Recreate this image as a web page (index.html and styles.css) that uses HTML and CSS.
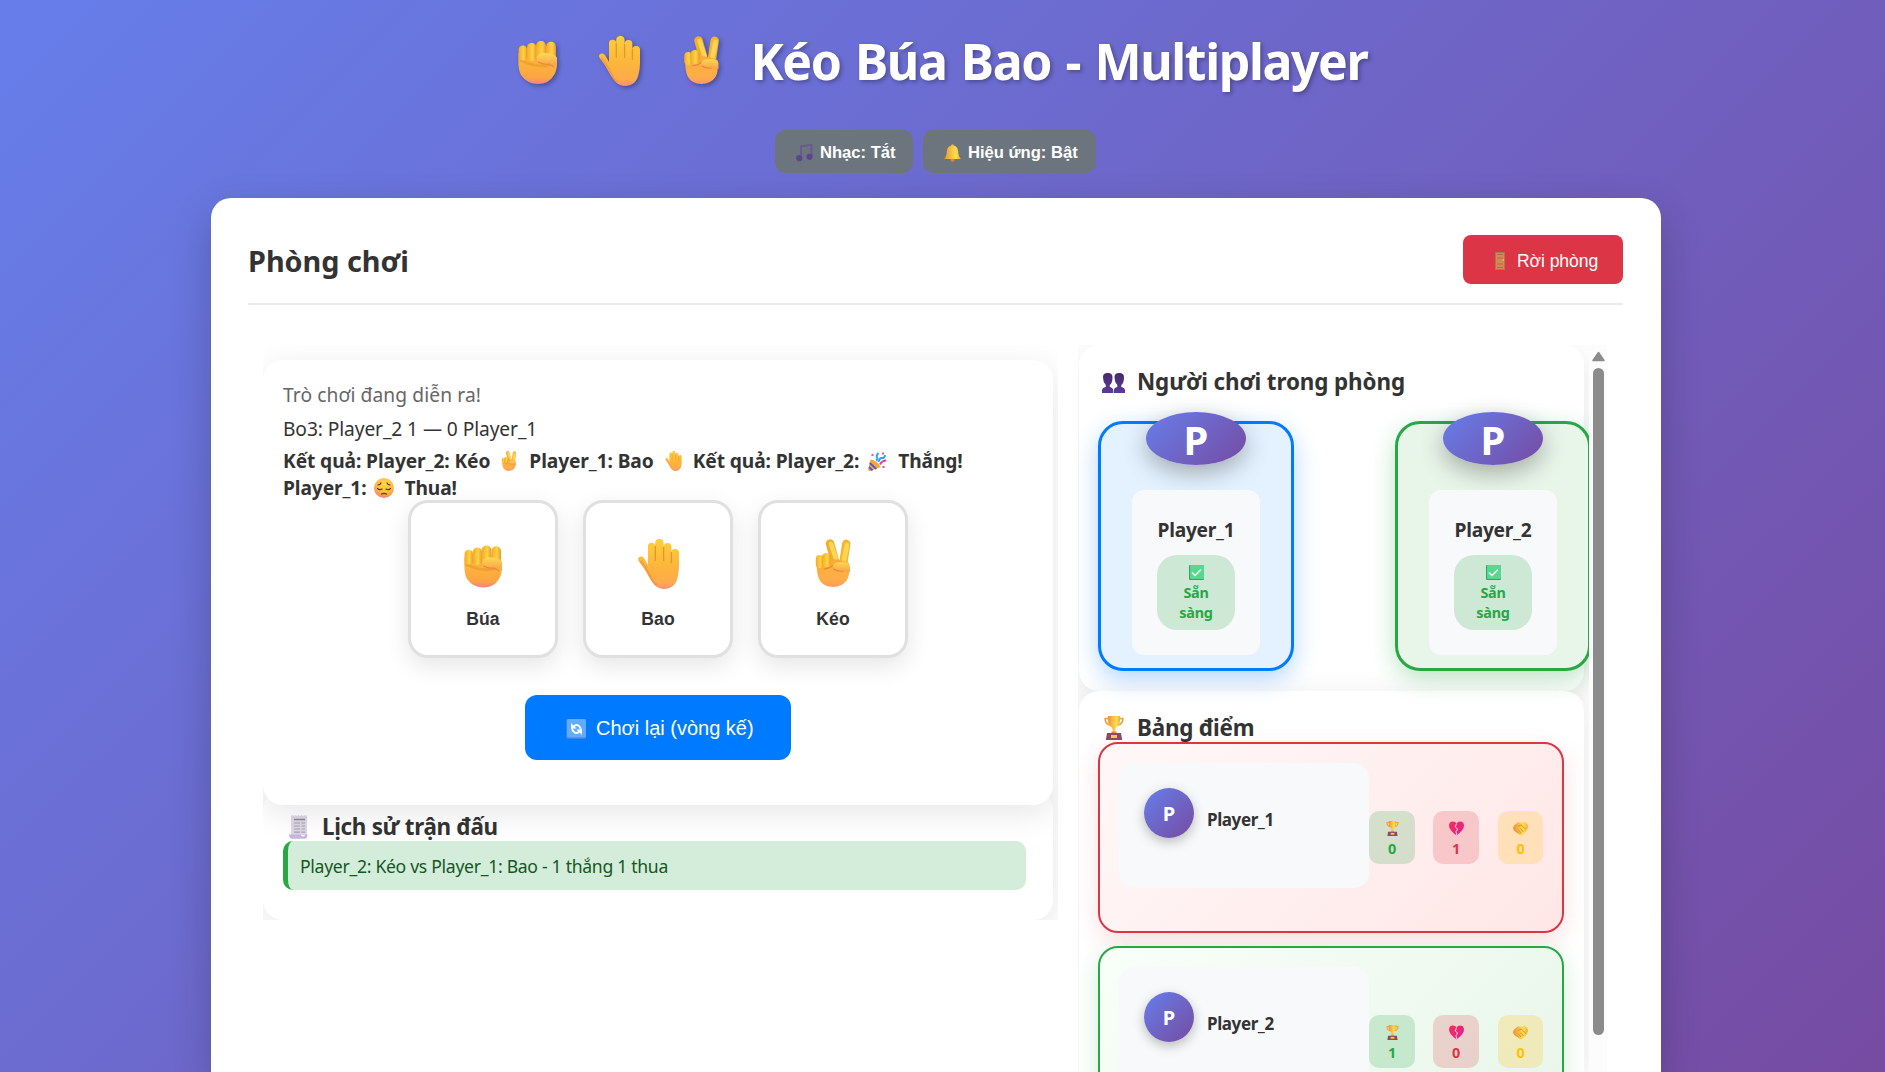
FILE: index.html
```html
<!DOCTYPE html>
<html lang="vi">
<head>
<meta charset="utf-8">
<title>Kéo Búa Bao - Multiplayer</title>
<link rel="stylesheet" href="styles.css">
</head>
<body>
<svg class="defs" width="0" height="0" aria-hidden="true">
  <defs>
    <linearGradient id="skin" x1="0" y1="0" x2="0" y2="1"><stop offset="0" stop-color="#fdcf3c"/><stop offset=".55" stop-color="#fdb53b"/><stop offset=".88" stop-color="#feaa4c"/><stop offset="1" stop-color="#fb8c78"/></linearGradient>
    <linearGradient id="palm" x1="0" y1="0" x2="0" y2="1"><stop offset="0" stop-color="#f5a931"/><stop offset=".4" stop-color="#fdb23e"/><stop offset=".82" stop-color="#fda443"/><stop offset="1" stop-color="#fc7d8a"/></linearGradient>
    <linearGradient id="palm2" x1="0" y1="0" x2="0" y2="1"><stop offset="0" stop-color="#f9ab35"/><stop offset=".7" stop-color="#feae48"/><stop offset="1" stop-color="#fd9b5c"/></linearGradient>
    <linearGradient id="finger" x1="0" y1="0" x2="1" y2="0"><stop offset="0" stop-color="#f6a924"/><stop offset=".6" stop-color="#fdd348"/><stop offset="1" stop-color="#e79a2c"/></linearGradient>
    <linearGradient id="thumb" x1="0" y1="0" x2="0" y2="1"><stop offset="0" stop-color="#ffd952"/><stop offset="1" stop-color="#f8a04a"/></linearGradient>
    <linearGradient id="gold" x1="0" y1="0" x2="1" y2="0"><stop offset="0" stop-color="#ef8f3c"/><stop offset=".7" stop-color="#fde04e"/><stop offset="1" stop-color="#f4a83c"/></linearGradient>
    <linearGradient id="bust" x1="0" y1="0" x2="0" y2="1"><stop offset="0" stop-color="#452a6e"/><stop offset="1" stop-color="#5d3a99"/></linearGradient>
    <linearGradient id="heart" x1="0" y1="0" x2="1" y2="1"><stop offset="0" stop-color="#f72d55"/><stop offset="1" stop-color="#e0209a"/></linearGradient>
    <radialGradient id="face" cx=".55" cy=".3" r=".75"><stop offset="0" stop-color="#ffd84a"/><stop offset=".6" stop-color="#ffb93e"/><stop offset="1" stop-color="#f5708a"/></radialGradient>
    <symbol id="fist" viewBox="0 0 40 43">
      <path d="M.600 12Q-.5 28 3 34q6 9 17 9t16-9q3.500-5 3-16L36 9Z" fill="url(#palm)"/>
      <path d="M2 19q15 8 30 5" fill="none" stroke="#e8952b" stroke-width="3" opacity=".55"/>
      <rect x=".6" y="4.500" width="8.600" height="15" rx="4.200" fill="url(#finger)"/>
      <rect x="9" y="2" width="9.400" height="18" rx="4.600" fill="url(#finger)"/>
      <rect x="18" y="0" width="10" height="18" rx="4.800" fill="url(#finger)"/>
      <rect x="28" y=".8" width="10" height="17" rx="4.800" fill="url(#finger)"/>
      <path d="M18.500 16q2-4.500 10-4 8 .500 10.500 5v8q-5-1-9-3-11 0-11.500-6Z" fill="url(#thumb)"/>
      <path d="M20 21q5 3 11 2l5 3" fill="none" stroke="#e9893f" stroke-width="1.200"/>
    </symbol>
    <symbol id="hand" viewBox="0 0 41 50">
      <path d="M10 26V7.500a3.600 3.600 0 0 1 7.200-.5V4a4.200 4.200 0 0 1 8.400 0v4a3.900 3.900 0 0 1 7.800 0v6a3.800 3.800 0 0 1 7.600-.5c0 10 .6 19-2 27-2 6-6.500 9.500-13 9.500-7 0-11-5-15-12Q7 30 1 22.500c-3-4 2-7 5-3.500Z" fill="url(#skin)"/>
      <path d="M17.300 7v15M25.600 8v14M33.400 13v11" stroke="#e59529" stroke-width="1.300" fill="none"/>
      <path d="M2 22q6 6 10 15 3 7 7 9" stroke="#ea8a36" stroke-width="2" fill="none" opacity=".5"/>
    </symbol>
    <symbol id="victory" viewBox="0 0 35 48">
      <path d="M14.500 4.500 20 24" stroke="#f3ac2b" stroke-width="8.500" stroke-linecap="round"/>
      <path d="M30.700 4.800 27.500 26" stroke="#f5b534" stroke-width="8.400" stroke-linecap="round"/>
      <path d="M15.500 5 20.500 20M31.500 6l-3 15" stroke="#ffd551" stroke-width="4.500" stroke-linecap="round"/>
      <path d="M1 22q0 14 3 19Q8 48 17.500 48q9 0 14-7 3-4 2-17Q18 17 1 22Z" fill="url(#palm2)"/>
      <rect x=".3" y="16" width="7.700" height="13" rx="3.800" fill="url(#finger)"/>
      <rect x="6.500" y="14" width="9" height="14" rx="4.300" fill="url(#finger)"/>
      <path d="M17.500 27q1-4 8-4 8 0 9 4v6q-5 0-8-2-8 0-9-4Z" fill="url(#thumb)"/>
      <path d="M8 30q8-1 9-4M18 30q5 3 10 2" stroke="#e8893b" stroke-width="1.200" fill="none"/>
    </symbol>
    <symbol id="note" viewBox="0 0 17 18">
      <path d="M5 13.500V2.300L15.500.9v11.500" fill="none" stroke="#6b5599" stroke-width="1.800"/>
      <circle cx="3.300" cy="14.200" r="3.100" fill="#5c458f"/><circle cx="13.500" cy="12.800" r="3.100" fill="#5c458f"/>
    </symbol>
    <symbol id="bell" viewBox="0 0 17 18">
      <circle cx="8.500" cy="15.800" r="2" fill="#e8813c"/><circle cx="8.500" cy="1.700" r="1.500" fill="#f7b23c"/>
      <path d="M8.500 1.500c5 0 5.500 4 5.800 7 .3 3 1 4.500 2.500 6.500H.2C1.700 13 2.400 11.500 2.700 8.500 3 5.500 3.500 1.500 8.500 1.500Z" fill="url(#gold)"/>
    </symbol>
    <symbol id="door" viewBox="0 0 10 18">
      <rect width="10" height="18" rx=".6" fill="#b8743f"/><rect x="1" y="1" width="8" height="16" fill="#cf8a58"/>
      <path d="M2 2.500h6M2 6h6M2 12h6M2 15.500h6" stroke="#b56a45"/><circle cx="8.300" cy="8" r=".9" fill="#ffb03b"/>
    </symbol>
    <symbol id="party" viewBox="0 0 19 19">
      <path d="M2.500 7.500Q9 8 12.500 15L2.500 19Q-.3 19.500.3 17Z" fill="#f6a63a"/>
      <path d="m1.800 11 6.500 6M1 15l3.500 3.500" stroke="#5a58c9" stroke-width="1.900"/>
      <path d="M8 8.500q2-1 1-3T10.500 1M10.500 10q1-4.500 3.500-4t3-3" stroke="#2fa4f2" stroke-width="2" fill="none"/>
      <path d="M12 12.500q2-4 6.300-4" stroke="#e83ca0" stroke-width="2" fill="none"/>
      <path d="M3.500 2h2v2h-2zM14 .5h2v2h-2zM14.500 14h2v2h-2z" fill="#f0508e"/>
    </symbol>
    <symbol id="sad" viewBox="0 0 20 20">
      <circle cx="10" cy="10" r="10" fill="url(#face)"/>
      <path d="M3.500 10.500q2 2 4.500.5M12 11q2.500 1.500 4.500-.5M4 7q2 0 3-2M16 7q-2 0-3-2M7.500 16q2.500-1.200 5 0" stroke="#5b2f3c" stroke-width="1.200" fill="none" stroke-linecap="round"/>
    </symbol>
    <symbol id="refresh" viewBox="0 0 20 20">
      <rect width="20" height="20" rx="1.500" fill="#3c83e6"/><rect x="1" y="0" width="19" height="18.500" rx="1.500" fill="#62acff"/>
      <path d="M7.500 7.500q3.500-3 6 0 1.500 2 1.300 3.500M13.500 12.500q-3.500 3-6 0Q6 11 6.200 9" stroke="#fff" stroke-width="1.900" fill="none"/>
      <path d="M5 4v5.500h5.500ZM16 16v-5.500h-5.500Z" fill="#fff"/>
    </symbol>
    <symbol id="busts" viewBox="0 0 23 20">
      <g fill="url(#bust)"><path d="M1 4.500C1 1 3 0 5.800 0S10.500 1 10.500 4.500 9.500 11 7.800 12v2q3.400.5 3.400 3.500V20H0v-2.500Q0 14.500 3.800 14v-2Q1 9 1 4.500Z"/><path d="M12.500 4.500C12.500 1 14.500 0 17.200 0S22 1 22 4.500 21 11 19.300 12v2q3.700.5 3.700 3.500V20H11.800v-2.500q0-3 3.500-3.500v-2q-2.800-3-2.800-7.500Z"/></g>
    </symbol>
    <symbol id="receipt" viewBox="0 0 19 24">
      <path d="M2 1l1.500-1L5 1l1.500-1L8 1l1.500-1L11 1l1.500-1L14 1l1.500-1L17 1l1-1v20H2Z" fill="#ddd6e6"/>
      <path d="M5 4.500h11" stroke="#8c8596" stroke-width="1.500"/>
      <path d="M5 8h6M12.500 8H16M5 11h6M12.500 11H16M5 14h6M12.500 14H16M5 17.200h6M12.500 17.200H16" stroke="#a59fad" stroke-width="1.200"/>
      <path d="M0 19.500h12q0 2 2 2t2-2h2.500q0 4-3 4.300H3Q0 23.500 0 19.500Z" fill="#c8b6df"/>
    </symbol>
    <symbol id="trophy" viewBox="0 0 20 24">
      <path d="M4.500 2.500H1.200Q1 8 6 9M15.500 2.500h3.300Q19 8 14 9" stroke="#f0a03c" stroke-width="1.700" fill="none"/>
      <path d="M4 0h12q1 9-4 11.500L10.800 17H9.200L8 11.500Q3 9 4 0Z" fill="url(#gold)"/><path d="M7.500 15.500h5V17h-5Z" fill="#e98a36"/>
      <path d="M3 17h14l1.200 7H1.800Z" fill="#8b4a63"/><rect x="7" y="19" width="6" height="3" fill="#fbc24a"/>
    </symbol>
    <symbol id="check" viewBox="0 0 15 15">
      <rect width="15" height="15" rx="1" fill="#2fa56a"/><rect x="1" width="14" height="14" rx="1" fill="#58d88f"/><path d="m3 7.500 3 3 6-6" stroke="#fff" stroke-width="1.400" fill="none"/>
    </symbol>
    <symbol id="broken" viewBox="0 0 15 14">
      <path d="M7.500 14Q0 8.500 0 4.300 0 0 4 0q2.300 0 3.500 2Q8.800 0 11 0q4 0 4 4.300 0 4.200-7.500 9.700Z" fill="url(#heart)"/>
      <path d="m7.500 2-1.300 3.500 2.500 2L7 10l.7 3.500" stroke="#ffdbe4" stroke-width="1" fill="none"/>
    </symbol>
    <symbol id="shake" viewBox="0 0 15 14">
      <path d="M1 4 5 .8l3 .8 3-1.300q4.500 2 3.800 6Q13 11 9 13.500 7 14.500 5 12 0 9.500 0 6.500Z" fill="url(#gold)"/>
      <path d="m5 5 3-1.500 5 4.500M3 9l3 3M5 8l3 3.500M7.500 7l3 3.500" stroke="#df8d27" fill="none" stroke-width=".9"/>
    </symbol>
  </defs>
</svg>

<header class="top">
  <h1 class="title">
    <svg class="em-fist"><use href="#fist"/></svg><svg class="em-hand"><use href="#hand"/></svg><svg class="em-victory"><use href="#victory"/></svg><span>Kéo Búa Bao - Multiplayer</span>
  </h1>
  <div class="audio">
    <button class="audio-btn"><svg><use href="#note"/></svg><span>Nhạc: Tắt</span></button>
    <button class="audio-btn wide"><svg><use href="#bell"/></svg><span>Hiệu ứng: Bật</span></button>
  </div>
</header>

<main class="room">
  <div class="room-head">
    <h2>Phòng chơi</h2>
    <button class="leave"><svg><use href="#door"/></svg><span>Rời phòng</span></button>
  </div>
  <div class="columns">
    <div class="left">
      <section class="panel game">
        <p class="status">Trò chơi đang diễn ra!</p>
        <p class="series">Bo3: Player_2 1 — 0 Player_1</p>
        <p class="result">Kết quả: Player_2: Kéo<svg class="r-victory"><use href="#victory"/></svg>Player_1: Bao<svg class="r-hand"><use href="#hand"/></svg>Kết quả: Player_2:<svg class="r-party"><use href="#party"/></svg>Thắng!<br>Player_1:<svg class="r-sad"><use href="#sad"/></svg>Thua!</p>
        <div class="choices">
          <button class="choice"><svg class="c-fist"><use href="#fist"/></svg><span>Búa</span></button>
          <button class="choice"><svg class="c-hand"><use href="#hand"/></svg><span>Bao</span></button>
          <button class="choice"><svg class="c-victory"><use href="#victory"/></svg><span>Kéo</span></button>
        </div>
        <button class="replay"><svg><use href="#refresh"/></svg><span>Chơi lại (vòng kế)</span></button>
      </section>
      <section class="panel history">
        <h3><svg class="i-receipt"><use href="#receipt"/></svg>Lịch sử trận đấu</h3>
        <div class="history-item">Player_2: Kéo vs Player_1: Bao - 1 thắng 1 thua</div>
      </section>
    </div>
    <div class="right">
      <div class="scroll">
        <section class="panel players">
          <h3><svg class="i-busts"><use href="#busts"/></svg>Người chơi trong phòng</h3>
          <div class="player-row">
            <article class="player blue">
              <div class="avatar">P</div>
              <div class="info"><b>Player_1</b><div class="ready"><svg><use href="#check"/></svg>Sẵn<br>sàng</div></div>
            </article>
            <article class="player green">
              <div class="avatar">P</div>
              <div class="info"><b>Player_2</b><div class="ready"><svg><use href="#check"/></svg>Sẵn<br>sàng</div></div>
            </article>
          </div>
        </section>
        <section class="panel board">
          <h3 class="board-title"><svg class="i-trophy"><use href="#trophy"/></svg>Bảng điểm</h3>
          <article class="score lose">
            <div class="who"><div class="dot">P</div><b>Player_1</b></div>
            <div class="chip win"><svg><use href="#trophy"/></svg>0</div>
            <div class="chip loss"><svg><use href="#broken"/></svg>1</div>
            <div class="chip draw"><svg><use href="#shake"/></svg>0</div>
          </article>
          <article class="score lead">
            <div class="who"><div class="dot">P</div><b>Player_2</b></div>
            <div class="chip win"><svg><use href="#trophy"/></svg>1</div>
            <div class="chip loss"><svg><use href="#broken"/></svg>0</div>
            <div class="chip draw"><svg><use href="#shake"/></svg>0</div>
          </article>
        </section>
      </div>
      <div class="scrollbar">
        <svg class="arrow" viewBox="0 0 13 10"><path d="M6.500 1 12 9H1Z" fill="#8b8b8b" stroke="#8b8b8b" stroke-width="1.500" stroke-linejoin="round"/></svg>
        <div class="bar"></div>
      </div>
    </div>
  </div>
</main>
</body>
</html>
```
FILE: styles.css
```css
* { box-sizing: border-box; margin: 0; padding: 0; }
body {
  height: 1072px; overflow: hidden; padding: 30px 13px 0 0;
  font-family: "Segoe UI", "Noto Sans", sans-serif; color: #333;
  background: linear-gradient(135deg, #667eea 0%, #764ba2 100%);
}
.defs { position: absolute; }
svg { flex: none; }
button { border: 0; font-family: Arial, "Liberation Sans", sans-serif; }
b { font-weight: 700; }

.title {
  display: flex; justify-content: center; align-items: flex-end; height: 60px; margin-left: 14px;
  font-size: 50px; line-height: 60px; letter-spacing: -1.4px; word-spacing: 2.8px; color: #fff;
  text-shadow: 2px 2px 4px rgba(0,0,0,.3);
}
.title svg { filter: drop-shadow(2px 2px 2px rgba(0,0,0,.3)); }
.title span { line-height: 58px; }
.em-fist { width: 40px; height: 43px; margin: 0 41px 6px 0; }
.em-hand { width: 41px; height: 50px; margin: 0 44px 4px 0; }
.em-victory { width: 35px; height: 48px; margin: 0 31px 6px 0; }

.audio { display: flex; justify-content: center; gap: 10px; margin: 40px 1px 0 0; }
.audio-btn {
  display: flex; align-items: center; gap: 7px; width: 138px; height: 43px; padding-left: 21px;
  border-radius: 10px; background: #6c757d; color: #fff;
  font-size: 16.6px; font-weight: 700; white-space: nowrap;
}
.audio-btn.wide { width: 173px; }
.audio-btn svg { width: 17px; height: 18px; margin-top: 2px; }
.audio-btn span { padding-top: 2px; }

.room {
  width: 1450px; height: 874px; margin: 25px auto 0; padding: 37px 38px 0 37px; overflow: hidden;
  border-radius: 20px 20px 0 0; background: #fff; box-shadow: 0 15px 40px rgba(0,0,0,.2);
}
.room-head {
  display: flex; justify-content: space-between; align-items: flex-start;
  height: 70px; border-bottom: 2px solid #e9ecef;
}
.room-head h2 { font-size: 28.8px; line-height: 52px; }
.leave {
  display: flex; align-items: center; gap: 12px; width: 160px; height: 49px; padding: 3px 0 0 32px;
  border-radius: 8px; background: #dc3545; color: #fff; font-size: 17.6px; letter-spacing: -.1px; white-space: nowrap;
}
.leave svg { width: 10px; height: 18px; }

.columns { display: flex; gap: 20px; margin: 40px 15px 0; }
.left { width: 795px; height: 575px; padding: 15px 5px 0 0; overflow: hidden; }
.panel { border-radius: 20px; background: #fff; box-shadow: 0 8px 32px rgba(0,0,0,.1); }
.panel h3 { display: flex; align-items: center; font-size: 22.4px; line-height: 30px; letter-spacing: -.1px; white-space: nowrap; }

.game { position: relative; height: 445px; margin-bottom: -15px; padding: 21px 20px 0; font-size: 19.2px; line-height: 27px; }
.status { color: #666; letter-spacing: .1px; }
.series { margin-top: 7px; letter-spacing: -.1px; }
.result { height: 53px; margin-top: 5px; font-weight: 700; letter-spacing: -.1px; white-space: nowrap; }
.result svg { vertical-align: -3px; }
.r-victory { width: 16px; height: 20px; margin: 0 12px 0 11px; }
.r-hand { width: 17px; height: 20px; margin: 0 11px; }
.r-party { width: 19px; height: 19px; margin: 0 11px 0 9px; }
.r-sad { width: 20px; height: 20px; margin: 0 10px 0 8px; }
.choices { display: flex; justify-content: center; gap: 25px; }
.choice {
  display: flex; flex-direction: column; align-items: center; justify-content: flex-end;
  width: 150px; height: 158px; padding-bottom: 26px; border: 3px solid #e0e0e0; border-radius: 20px;
  background: #fff; color: #333; box-shadow: 0 8px 25px rgba(0,0,0,.1);
}
.choice span { font-size: 17.6px; font-weight: 700; line-height: 20px; letter-spacing: .1px; }
.c-fist { width: 39px; height: 43px; margin-bottom: 21px; }
.c-hand { width: 41px; height: 50px; margin-bottom: 20px; }
.c-victory { width: 36px; height: 48px; margin-bottom: 22px; }
.replay {
  display: flex; align-items: center; gap: 10px; width: 266px; height: 65px; margin: 37px auto 0; padding-left: 41px;
  border-radius: 12px; background: #007bff; color: #fff; font-size: 20px; white-space: nowrap;
}
.replay svg { width: 20px; height: 20px; margin-top: 2px; }
.replay span { padding-top: 2px; }

.history { height: 130px; padding: 22px 20px 0; }
.history h3 { height: 29px; letter-spacing: -.3px; }
.i-receipt { width: 19px; height: 24px; margin: 0 14px 0 6px; }
.history-item {
  width: 743px; height: 49px; padding-left: 12px; border-left: 5px solid #28a745; border-radius: 10px;
  background: #d4edda; color: #155724; font-size: 17.6px; line-height: 50px; letter-spacing: -.3px;
}

.right { display: flex; width: 530px; height: 727px; overflow: hidden; }
.scroll { width: 511px; overflow: hidden; padding: 0 5px 0 1px; }
.players { height: 346px; padding: 22px 19px 0; }
.i-busts { width: 23px; height: 20px; margin: 2px 12px 0 4px; }
.i-trophy { width: 20px; height: 24px; margin: 0 13px 0 6px; }
.player-row { display: flex; gap: 101px; margin-top: 24px; }
.player {
  display: flex; flex: none; flex-direction: column; align-items: center; width: 196px; height: 250px;
  border: 3px solid; border-radius: 25px;
}
.blue { border-color: #007bff; background: #e4f2ff; box-shadow: 0 8px 25px rgba(0,123,255,.3); }
.green { border-color: #28a745; background: #e8f5e9; box-shadow: 0 8px 25px rgba(40,167,69,.3); }
.avatar {
  width: 100px; height: 53px; margin-top: -12px; border-radius: 50%; text-align: center;
  font-size: 40px; font-weight: 700; line-height: 55px; color: #fff;
  background: linear-gradient(135deg, #667eea, #764ba2); box-shadow: 0 8px 25px rgba(0,0,0,.3);
}
.info {
  display: flex; flex-direction: column; align-items: center; gap: 12px;
  width: 128px; height: 165px; margin-top: 25px; padding-top: 27px; border-radius: 12px; background: #f8f9fa;
}
.info b { font-size: 19.2px; line-height: 26px; letter-spacing: -.25px; }
.ready {
  width: 78px; height: 75px; padding-top: 10px;
  border-radius: 20px; background: rgba(40,167,69,.2); color: #28a745; text-align: center;
  font-size: 14.4px; font-weight: 700; line-height: 20px; letter-spacing: -.25px;
}
.ready svg { display: block; width: 15px; height: 15px; margin: 0 auto 3px; }

.board { height: 381px; padding: 22px 20px 0 19px; border-radius: 20px 20px 0 0; overflow: hidden; }
.panel .board-title { height: 29px; letter-spacing: -.2px; }
.score {
  display: flex; align-items: center; width: 466px; height: 191px; margin-bottom: 13px; padding: 0 19px;
  border: 2px solid; border-radius: 20px;
}
.lose { border-color: #dc3545; background: linear-gradient(135deg, #fff8f8, #ffe6e6); box-shadow: 0 8px 25px rgba(220,53,69,.16); }
.lead { border-color: #28a745; background: linear-gradient(135deg, #f8fff8, #e8f5e9); box-shadow: 0 8px 25px rgba(40,167,69,.2); }
.who {
  display: flex; align-self: flex-start; gap: 13px; width: 250px; height: 125px; margin-top: 19px; padding: 25px;
  border-radius: 15px; background: #f8f9fa;
}
.dot {
  width: 50px; height: 50px; border-radius: 50%; text-align: center; font-size: 20px; font-weight: 700; line-height: 51px;
  color: #fff; background: linear-gradient(135deg, #667eea, #764ba2); box-shadow: 0 4px 12px rgba(0,0,0,.25);
}
.who b { margin-top: 20px; font-size: 17px; line-height: 24px; letter-spacing: -.4px; }
.chip {
  display: flex; flex-direction: column; align-items: center; gap: 3px; width: 46px; height: 53px; padding-top: 10px;
  border-radius: 10px; font-size: 14.4px; font-weight: 700; line-height: 20px;
}
.chip svg { width: 15px; height: 15px; }
.win { background: rgba(40,167,69,.2); color: #28a745; }
.loss { margin: 0 19px 0 18px; background: rgba(220,53,69,.2); color: #dc3545; }
.draw { width: 45px; background: rgba(255,193,7,.22); color: #ffc107; }

.scrollbar { display: flex; flex-direction: column; width: 18px; padding: 6px 0 0 3px; background: #fcfcfc; }
.arrow { width: 13px; height: 11px; margin-bottom: 6px; }
.bar { width: 11px; height: 667px; margin-left: 1px; border-radius: 6px; background: #8b8b8b; }
```
